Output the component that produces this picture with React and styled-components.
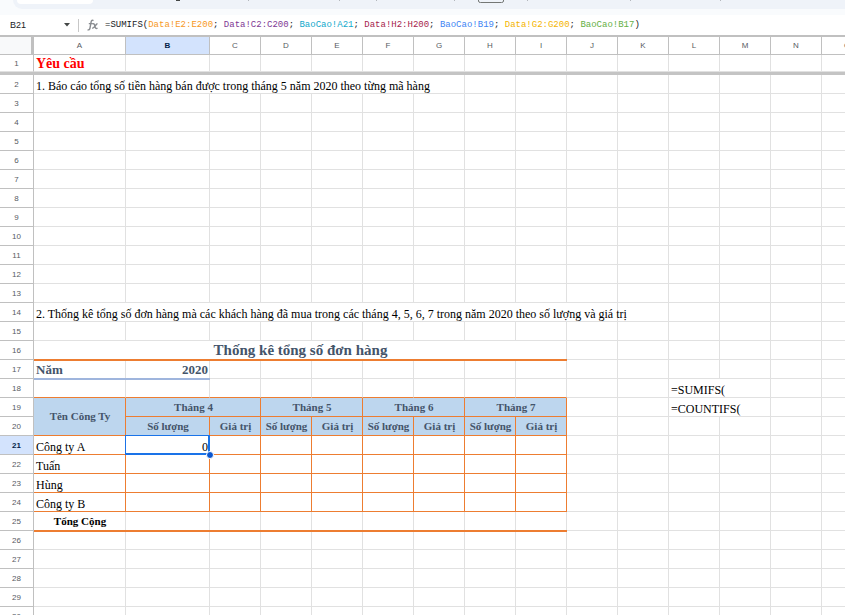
import { Fragment } from 'react';
import styled, { createGlobalStyle, css } from 'styled-components';

const GlobalStyle = createGlobalStyle`
  * {
    box-sizing: border-box;
  }

  body {
    margin: 0;
    background: #fff;
    font-family: 'Liberation Sans', Arial, sans-serif;
  }
`;

const ORANGE = '#ed7d31';
const BLUE = '#1a73e8';

const Page = styled.div`
  display: flex;
  flex-direction: column;
  height: 100vh;
  overflow: hidden;
`;

const ToolbarArea = styled.header`
  flex: none;
  height: 15px;
  padding-left: 13px;
  background: #f9fbfd;
`;

const Toolbar = styled.div`
  display: flex;
  height: 9px;
  padding-left: 4px;
  background: #eff3f9;
  border-bottom-left-radius: 9px;
`;

const SearchPill = styled.div`
  width: 76px;
  height: 4px;
  background: #fff;
  border-radius: 0 0 6px 6px;
`;

const ToolbarMarks = styled.svg`
  display: block;
  flex: none;
`;

const FormulaBar = styled.div`
  display: flex;
  flex: none;
  align-items: center;
  height: 20px;
`;

const NameBox = styled.input`
  width: 60px;
  padding: 0 0 0 10px;
  border: 0;
  outline: none;
  background: none;
  color: #202124;
  font-family: 'Liberation Sans', Arial, sans-serif;
  font-size: 9px;
`;

const DropButton = styled.button`
  display: flex;
  align-items: center;
  justify-content: center;
  width: 14px;
  height: 14px;
  padding: 0;
  border: 0;
  background: none;
`;

const BarDivider = styled.span`
  width: 1px;
  height: 13px;
  margin: 0 8px 0 4px;
  background: #c7c7c7;
`;

const FxIcon = styled.svg`
  flex: none;
  margin-right: 6px;
`;

const Formula = styled.div`
  flex: 1;
  color: #202124;
  font-family: 'Liberation Mono', 'Courier New', monospace;
  font-size: 9px;
  line-height: 14px;
  white-space: pre;
  outline: none;
`;

const Ref = styled.span`
  color: ${({ $color }) => $color};
`;

const SheetArea = styled.main`
  flex: 1;
  min-height: 0;
  overflow: hidden;
  border-top: 2px solid #c0c0c0;
`;

const Grid = styled.table`
  width: 873px;
  table-layout: fixed;
  border-collapse: separate;
  border-spacing: 0;
`;

const Col = styled.col`
  width: ${({ $width }) => $width}px;
`;

const Corner = styled.td`
  padding: 0;
  background: #f8f9fa;
  border-right: 3px solid #c0c0c0;
  border-bottom: 1px solid #c0c0c0;
`;

const ColumnHead = styled.th`
  height: 18px;
  padding: 0;
  border-right: 1px solid #c0c0c0;
  border-bottom: 1px solid #c0c0c0;
  background: ${({ $active }) => ($active ? '#d3e3fd' : '#fff')};
  color: ${({ $active }) => ($active ? '#041e49' : '#575b5f')};
  font-size: 8px;
  font-weight: ${({ $active }) => ($active ? 700 : 400)};
  line-height: 14px;
`;

const RowHead = styled.th`
  padding: 2px 0 0;
  border-right: 1px solid #c0c0c0;
  border-bottom: 1px solid ${({ $frozen }) => ($frozen ? '#e1e1e1' : '#c0c0c0')};
  background: ${({ $active }) => ($active ? '#d3e3fd' : '#fff')};
  color: ${({ $active }) => ($active ? '#041e49' : '#575b5f')};
  font-size: 8px;
  font-weight: ${({ $active }) => ($active ? 700 : 400)};
  line-height: 14px;
`;

const FreezeBar = styled.td`
  height: 3px;
  padding: 0;
  background: #c4c4c4;
`;

const Row = styled.tr`
  height: ${({ $height = 19 }) => $height}px;
`;

const variants = {
  heading: css`
    color: #ff0000;
    font-size: 14px;
    font-weight: 700;
    line-height: 15px;
  `,
  title: css`
    color: #44546a;
    font-size: 15px;
    font-weight: 700;
    line-height: 15px;
    text-align: center;
    vertical-align: middle;
  `,
  year: css`
    color: #44546a;
    font-size: 13px;
    font-weight: 700;
    line-height: 15px;
    vertical-align: middle;
  `,
  head: css`
    background: #bdd6ee;
    color: #44546a;
    font-size: 11px;
    font-weight: 700;
    line-height: 15px;
    text-align: center;
    vertical-align: middle;
  `,
  total: css`
    font-size: 11px;
    font-weight: 700;
    line-height: 15px;
    text-align: center;
    vertical-align: middle;
  `,
};

// A two-pixel rule that covers the gridline below the cell
const thickRule = css`
  &::after {
    content: '';
    position: absolute;
    z-index: 1;
    left: 0;
    right: -1px;
    bottom: -2px;
    height: 2px;
    background: ${({ $bottom }) => $bottom};
  }
`;

const Cell = styled.td`
  position: relative;
  padding: 0 1px 0 2px;
  border-right: 1px solid ${({ $right }) => $right || '#e1e1e1'};
  border-bottom: 1px solid ${({ $bottom }) => $bottom || '#e1e1e1'};
  color: #000;
  font-family: 'Liberation Serif', 'Times New Roman', serif;
  font-size: 12px;
  line-height: 13px;
  text-align: ${({ $align }) => $align || 'left'};
  vertical-align: bottom;
  white-space: nowrap;
  ${({ $thick }) => $thick && thickRule}
  ${({ $variant }) => variants[$variant]}
`;

const Selection = styled.span`
  position: absolute;
  inset: -1px;
  border: solid ${BLUE};
  border-width: 1px 2px 2px 1px;
  pointer-events: none;
`;

const FillHandle = styled.span`
  position: absolute;
  z-index: 1;
  right: -5px;
  bottom: -5px;
  width: 8px;
  height: 8px;
  border: 1px solid #fff;
  border-radius: 50%;
  background: #0b57d0;
`;

const COLUMNS = 'ABCDEFGHIJKLMNO'.split('');
const WIDTHS = { A: 92, B: 84 };

const FORMULA = [
  ['Data!E2:E200', '#f7981d'],
  ['Data!C2:C200', '#7e3794'],
  ['BaoCao!A21', '#11a9cc'],
  ['Data!H2:H200', '#a61d4c'],
  ['BaoCao!B19', '#4285f4'],
  ['Data!G2:G200', '#f4b400'],
  ['BaoCao!B17', '#65b045'],
];

const MONTH_STARTS = { B: 'Tháng 4', D: 'Tháng 5', F: 'Tháng 6', H: 'Tháng 7' };

const CELLS = {
  A1: { text: 'Yêu cầu', variant: 'heading' },
  A2: { text: '1. Báo cáo tổng số tiền hàng bán được trong tháng 5 năm 2020 theo từng mã hàng', span: 7 },
  A14: {
    text: '2. Thống kê tổng số đơn hàng mà các khách hàng đã mua trong các tháng 4, 5, 6, 7 trong năm 2020 theo số lượng và giá trị',
    span: 10,
  },
  A16: { text: 'Thống kê tổng số đơn hàng', variant: 'title', span: 9, bottom: ORANGE, thick: true },
  A17: { text: 'Năm', variant: 'year', bottom: '#9fb5dd', thick: true },
  B17: { text: '2020', variant: 'year', align: 'right', bottom: '#9fb5dd', thick: true },
  L18: { text: '=SUMIFS(', span: 2 },
  A19: { text: 'Tên Công Ty', variant: 'head', rows: 2, right: ORANGE, bottom: ORANGE },
  L19: { text: '=COUNTIFS(', span: 2 },
  A21: { text: 'Công ty A' },
  B21: { text: '0', align: 'right', selected: true },
  A22: { text: 'Tuấn' },
  A23: { text: 'Hùng' },
  A24: { text: 'Công ty B' },
  A25: { text: 'Tổng Cộng', variant: 'total' },
};

// Contents and borders of one cell; borders of the report table are added here
const getCell = (column, row) => {
  const cell = { ...CELLS[column + row] };
  if (column > 'I') {
    return cell;
  }
  if (row === 18) {
    cell.bottom = ORANGE;
  }
  if (row === 19 && MONTH_STARTS[column]) {
    return { text: MONTH_STARTS[column], variant: 'head', span: 2, right: ORANGE, bottom: ORANGE };
  }
  if (row === 20) {
    const text = MONTH_STARTS[column] ? 'Số lượng' : 'Giá trị';
    return { text, variant: 'head', right: ORANGE, bottom: ORANGE };
  }
  if (row >= 21 && row <= 24) {
    cell.right = ORANGE;
    cell.bottom = ORANGE;
  }
  if (row === 25) {
    cell.bottom = ORANGE;
    cell.thick = true;
  }
  return cell;
};

const buildRow = (row) => {
  const cells = [];
  let i = row === 20 ? 1 : 0;
  while (i < COLUMNS.length) {
    const cell = getCell(COLUMNS[i], row);
    cells.push({ id: COLUMNS[i] + row, ...cell });
    i += cell.span || 1;
  }
  return cells;
};

const ROWS = Array.from({ length: 30 }, (_, i) => i + 1);

function SheetRow({ row }) {
  return (
    <Row $height={row === 1 ? 17 : 19}>
      <RowHead scope="row" $active={row === 21} $frozen={row === 1}>{row}</RowHead>
      {buildRow(row).map((cell) => (
        <Cell
          key={cell.id}
          colSpan={cell.span}
          rowSpan={cell.rows}
          $variant={cell.variant}
          $align={cell.align}
          $right={cell.right}
          $bottom={cell.bottom}
          $thick={cell.thick}
        >
          {cell.text}
          {cell.selected && (
            <>
              <Selection />
              <FillHandle />
            </>
          )}
        </Cell>
      ))}
    </Row>
  );
}

export default function App() {
  return (
    <Page>
      <GlobalStyle />
      <ToolbarArea>
        <Toolbar>
          <SearchPill />
          <ToolbarMarks width="752" height="9" viewBox="93 0 752 9" fill="none" stroke="#b4b8bd">
            <path d="M248.500 0v1M339.500 0v1M376.500 0v1M454.500 0v1M527.500 0v1M630.500 0v1M720.500 0v1" />
            <path d="M176 .5h4" stroke="#444746" />
            <path d="M478.500 0v1q0 1.500 2 1.500h21q2 0 2-1.500v-1" stroke="#747775" />
          </ToolbarMarks>
        </Toolbar>
      </ToolbarArea>
      <FormulaBar>
        <NameBox aria-label="Name box" defaultValue="B21" />
        <DropButton type="button" aria-label="Named ranges">
          <svg width="6" height="4" viewBox="0 0 6 4">
            <path d="M0 0h6L3 3.500z" fill="#444746" />
          </svg>
        </DropButton>
        <BarDivider />
        <FxIcon width="12" height="12" viewBox="0 0 12 12" fill="none" stroke="#8a8d91" strokeWidth="1.400">
          <path d="M6.500 1.600C5.300.900 4.400 1.400 4.100 3L3 9C2.700 10.600 1.900 11.200.500 10.800M1.800 4.600h4" />
          <path d="M5.600 4.900c1.400-.700 1.800.200 2.300 2.200s1 2.900 2.600 2.100M10.500 4.800C8.800 4.700 7.600 9.400 5.200 9.300" />
        </FxIcon>
        <Formula role="textbox" aria-label="Formula" tabIndex={0}>
          =SUMIFS(
          {FORMULA.map(([ref, color], i) => (
            <Fragment key={ref}>
              {i > 0 && '; '}
              <Ref $color={color}>{ref}</Ref>
            </Fragment>
          ))}
          )
        </Formula>
      </FormulaBar>
      <SheetArea>
        <Grid>
          <colgroup>
            <Col $width={34} />
            {COLUMNS.map((column) => (
              <Col key={column} $width={WIDTHS[column] || 51} />
            ))}
          </colgroup>
          <thead>
            <tr>
              <Corner />
              {COLUMNS.map((column) => (
                <ColumnHead key={column} scope="col" $active={column === 'B'}>{column}</ColumnHead>
              ))}
            </tr>
          </thead>
          <tbody>
            <SheetRow row={1} />
            <tr>
              <FreezeBar colSpan={COLUMNS.length + 1} />
            </tr>
            {ROWS.slice(1).map((row) => (
              <SheetRow key={row} row={row} />
            ))}
          </tbody>
        </Grid>
      </SheetArea>
    </Page>
  );
}
